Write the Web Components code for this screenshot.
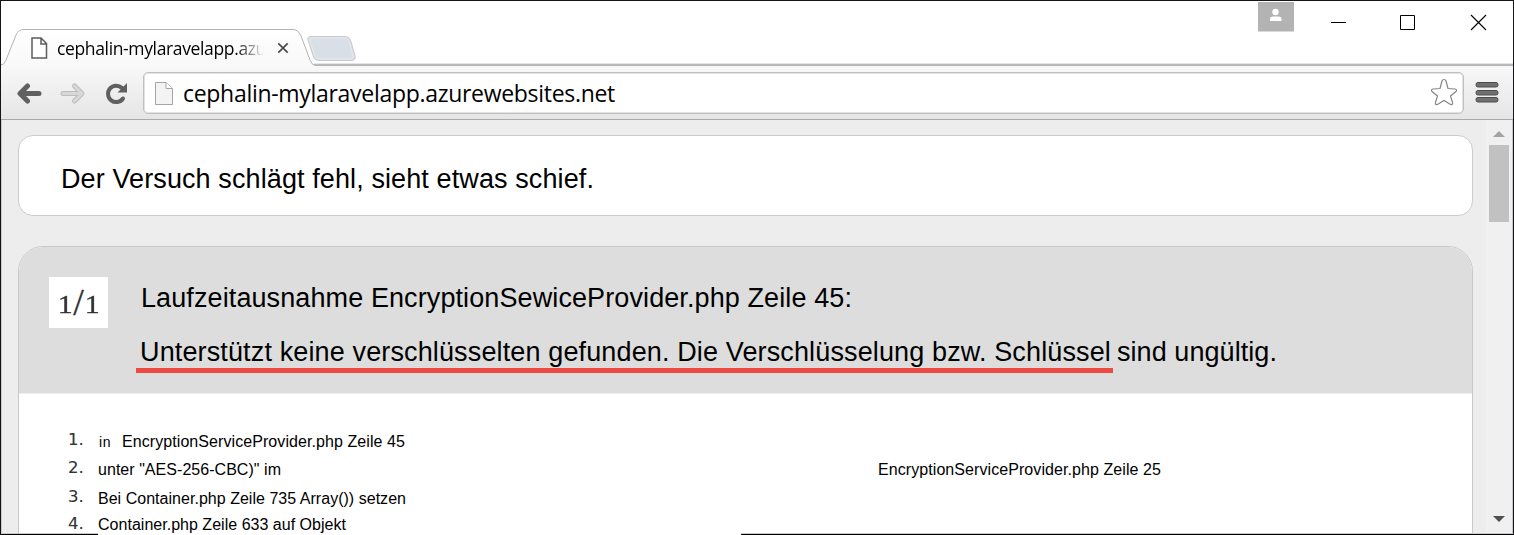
<!DOCTYPE html>
<html lang="de">
<head>
<meta charset="utf-8">
<title>cephalin-mylaravelapp.azurewebsites.net</title>
<style>
html,body{margin:0;width:1514px;height:535px;overflow:hidden;background:#fff}
body{font-family:"Liberation Sans",Arial,sans-serif;color:#000}
.digit{display:inline-block;transform:scaleX(1.2);margin:2px 1.500px 0}
.slash{font-size:38px;margin:-4px .5px 0}
</style>
</head>
<body>
<browser-window>
  <tab-strip slot="tabs"><fit-text w="209">cephalin-mylaravelapp.azu</fit-text></tab-strip>
  <nav-bar slot="nav"><fit-text w="432">cephalin-mylaravelapp.azurewebsites.net</fit-text></nav-bar>
  <error-banner><fit-text w="533">Der Versuch schlägt fehl, sieht etwas schief.</fit-text></error-banner>
  <exception-panel>
    <span slot="count"><span class="digit">1</span><span class="slash">/</span><span class="digit">1</span></span>
    <fit-text slot="title" w="711">Laufzeitausnahme EncryptionSewiceProvider.php Zeile 45:</fit-text>
    <fit-text slot="marked" w="971">Unterstützt keine verschlüsselten gefunden. Die Verschlüsselung bzw. Schlüssel</fit-text>
    <fit-text slot="rest" w="160">sind ungültig.</fit-text>
    <trace-row n="1." style="--h:28px"><fit-text w="12" style="font-size:14px;margin:0 11px 0 1px">in</fit-text><fit-text w="283">EncryptionServiceProvider.php Zeile 45</fit-text></trace-row>
    <trace-row n="2." style="--h:29px"><fit-text w="183" style="margin-right:597px">unter "AES-256-CBC)" im</fit-text><fit-text w="283">EncryptionServiceProvider.php Zeile 25</fit-text></trace-row>
    <trace-row n="3." style="--h:26px"><fit-text w="308">Bei Container.php Zeile 735 Array()) setzen</fit-text></trace-row>
    <trace-row n="4." style="--h:26px;--shift:1px"><fit-text w="248">Container.php Zeile 633 auf Objekt</fit-text></trace-row>
  </exception-panel>
</browser-window>
<script>
const define = (name, html, ready) => customElements.define(name, class extends HTMLElement {
  connectedCallback() {
    if (this.shadowRoot) return;
    this.attachShadow({mode: 'open'}).innerHTML = html;
    if (ready) ready(this);
  }
});

define('browser-window', `
<style>
:host{display:flex;flex-direction:column;position:relative;box-sizing:border-box;width:1514px;height:535px;border:1px solid #16131a;border-bottom-color:#000;background:#fff}
.view{display:flex;flex:1;min-height:0;background:#ededed;border:solid #c9c9c9;border-width:0 1px 1px;box-sizing:border-box}
.page{flex:1;min-width:0;overflow:hidden;padding:15px 13px 0 16px;box-sizing:border-box}
.gap{position:absolute;left:97px;bottom:-1px;width:643px;height:2px;background:#fff}
</style>
<slot name="tabs"></slot><slot name="nav"></slot>
<div class="view"><div class="page"><slot></slot></div><scroll-bar></scroll-bar></div>
<div class="gap"></div>`);

define('fit-text', `<style>:host{display:inline-block;white-space:pre;flex:none}</style><slot></slot>`, el => {
  const target = +el.getAttribute('w');
  requestAnimationFrame(() => {
    const n = el.textContent.length;
    const natural = el.getBoundingClientRect().width;
    el.style.letterSpacing = ((target - natural) / n) + 'px';
    el.style.width = target + 'px';
  });
});

define('tab-strip', `
<style>
:host{display:flex;height:65px;flex:none;position:relative;font:17.500px "Open Sans","Noto Sans",sans-serif}
svg{display:block}
.shape{position:absolute;left:-1px;top:-1px}
.tab{position:relative;display:flex;align-items:center;height:24px;margin:35px 0 0 30px;width:262px}
.label{width:207px;overflow:hidden;line-height:24px;margin-left:9px;-webkit-mask-image:linear-gradient(90deg,#000 178px,transparent 207px)}
.close{margin-left:13px}
.controls{position:absolute;left:1256px;top:0}
</style>
<svg class="shape" width="1514" height="67">
  <defs><linearGradient id="g" x2="0" y2="1"><stop stop-color="#fff"/><stop offset="1" stop-color="#f8f8f8"/></linearGradient></defs>
  <path d="M1 64.500H1513" stroke="#b9b9b9"/><path d="M1 65.500H1513" stroke="#b5b5b5"/><path d="M314 63.500H1513" stroke="#e4e4e4"/>
  <path d="M1 66V65Q4 65 6 60L16 35Q18.500 29.500 24 29.500H293Q298 29.500 301 36L310 60Q312 65.500 316 65.500V67H1Z" fill="url(#g)"/>
  <path d="M1 65Q4 65 6 60L16 35Q18.500 29.500 24 29.500H293Q298 29.500 301 36L310 60Q312 65.500 316 65.500" fill="none" stroke="#b4b4b4"/>
  <path d="M311 36.500H345Q349 36.500 350.500 40L355 56Q356 60.500 351 60.500H319Q315 60.500 313.500 57L308 40Q307 36.500 311 36.500Z" fill="#d9dfe7" stroke="#cacaca"/>
  <path d="M312 38H345Q348 38 349 41L353 56Q354 59 350 59H319Q316 59 315 56L310 41Q309 38 312 38Z" fill="none" stroke="#e6eaef"/>
</svg>
<div class="tab">
  <svg width="17" height="22" viewBox="0 0 17 22"><path d="M1 1H10L15.500 6.500V21H1Z M10 1V7H15.500" fill="#fff" stroke="#5c5c5c" stroke-width="1.500"/></svg>
  <div class="label"><slot></slot></div>
  <svg class="close" width="12" height="12" viewBox="0 0 12 12"><path d="M1.300 1.300L10.700 10.700M10.700 1.300L1.300 10.700" stroke="#4a4a4a" stroke-width="1.700"/></svg>
</div>
<svg class="controls" width="240" height="36">
  <path d="M1 1H37V30.500H1Z" fill="#b3b3b3"/><circle cx="18.500" cy="11" r="3.200" fill="#fff"/><path d="M13 20V18Q13 15.500 16 15.500H21.500Q24.500 15.500 24.500 18V20Z" fill="#fff"/>
  <path d="M74 21.500H89" stroke="#000"/><path d="M143.500 14.500H157.500V28.500H143.500Z" fill="none" stroke="#000"/>
  <path d="M214 14L229 29M229 14L214 29" stroke="#000" stroke-width="1.100"/>
</svg>`);

define('nav-bar', `
<style>
:host{display:flex;position:relative;height:54px;flex:none;box-sizing:border-box;border-bottom:1px solid #a9a9a9;background:linear-gradient(#f8f8f8,#e5e5e5);padding:6px 13px 0 16px;font:23px "Open Sans","Noto Sans",sans-serif}
svg{display:block;flex:none}
.box{display:flex;box-sizing:border-box;width:1321px;height:42px;margin-left:16px;border:1px solid #c0c0c0;border-radius:5px;box-shadow:inset 0 0 0 1px #e2e2e2;background:#fff;padding:0 5px 0 11px}
.url{flex:1;line-height:40px;margin-left:9px}
.menu{margin-left:11px}
</style>
<svg width="110" height="42" viewBox="17 72 110 42">
  <g fill="none" stroke-width="5" stroke-linecap="round" stroke-linejoin="round"><path d="M39 93.500H21M27.500 86L20 93.500L27.500 101" stroke="#606060"/><path d="M63 93.500H81M74.500 86L82 93.500L74.500 101" stroke="#bdbdbd"/><path d="M63 93.500H81M74.500 86L82 93.500L74.500 101" stroke="#d8d8d8" stroke-width="3"/></g>
  <path d="M122 88A8.200 8.200 0 1 0 123 98.500" fill="none" stroke="#606060" stroke-width="4" stroke-linecap="round"/><path d="M127 83V92.500H117.500Z" fill="#606060"/>
</svg>
<div class="box">
<svg width="19" height="42" viewBox="155 72 19 42"><path d="M155.500 81.500H166L172.500 87.500V103.500H155.500Z" fill="#f3f3f3" stroke="#a5a5a5"/><path d="M166 81.500V87.500H172.500" fill="#fff" stroke="#a5a5a5"/></svg>
<div class="url"><slot></slot></div>
<svg width="28" height="40" viewBox="1430 73 28 40"><path d="M1444 79.500Q1445.500 79.500 1446 81L1448 88.500L1455 89Q1457.500 89.500 1456 91.500L1450.500 96L1452.500 102.500Q1453 105 1450.500 104.500L1444 100.500L1437.500 104.500Q1435 105 1435.500 102.500L1437.500 96L1432 91.500Q1430.500 89.500 1433 89L1440 88.500L1442 81Q1442.500 79.500 1444 79.500Z" fill="#fff" stroke="#858585" stroke-width="1.200"/></svg>
</div>
<svg class="menu" width="24" height="42" viewBox="1475 72 24 42"><g fill="#707070" stroke="#4c4c4c"><rect x="1476" y="82.500" width="22" height="4.500" rx="2"/><rect x="1476" y="90.500" width="22" height="4.500" rx="2"/><rect x="1476" y="97.500" width="22" height="4.500" rx="2"/></g></svg>`);

define('scroll-bar', `
<style>
:host{display:flex;flex-direction:column;align-items:center;width:26px;background:#f0f0f0;flex:none}
svg{display:block}.up{margin-top:11px}.thumb{width:20px;height:77px;margin-top:8px;background:#c1c1c1}.down{margin:auto 0 11px}
</style>
<svg class="up" width="12" height="6"><path d="M0 6L6 0L12 6Z" fill="#a3a3a3"/></svg>
<div class="thumb"></div>
<svg class="down" width="12" height="6"><path d="M0 0L6 6L12 0Z" fill="#505050"/></svg>`);

define('error-banner', `
<style>:host{display:block;box-sizing:border-box;height:81px;border:1.500px solid #ccc;border-radius:15px;background:#fff;padding:28px 0 0 42px;font-size:27px;line-height:30px}</style><slot></slot>`);

define('exception-panel', `
<style>
:host{display:block;box-sizing:border-box;height:320px;margin-top:30px;border:1px solid #c8c8c8;border-radius:25px 25px 0 0;background:#fff;overflow:hidden}
header{display:flex;height:147px;background:#ddd;box-sizing:border-box;padding:30px 0 0 30px;border-bottom:1px solid #eee}
.count{box-sizing:border-box;width:59px;height:51px;background:#fff;font:25px/54px "Liberation Serif",serif;color:#333;-webkit-text-stroke:.3px #333}
::slotted([slot=count]){display:flex;justify-content:center;align-items:center;height:54px}
.text{margin-left:31px;font-size:27px;line-height:30px}
.title{height:30px;margin:6px 0 24px 2px}
.line{display:flex}
.marked{height:31px;border-bottom:5px solid #ec4b43;width:977px;margin-left:-3px}
.marked ::slotted(*){margin-left:4px}
.rest{margin-left:4px}
.trace{padding:34px 0 0 49px}
</style>
<header><div class="count"><slot name="count"></slot></div>
<div class="text"><div class="title"><slot name="title"></slot></div><div class="line"><div class="marked"><slot name="marked"></slot></div><div class="rest"><slot name="rest"></slot></div></div></div></header>
<div class="trace"><slot></slot></div>`);

define('trace-row', `
<style>
:host{display:flex;height:var(--h);font-size:16px;line-height:28px}
b{width:30px;flex:none;font:16.500px/24px "DejaVu Sans",Verdana,sans-serif;color:#333;-webkit-text-stroke:.12px #333;margin-top:var(--shift,0)}
</style><b></b><slot></slot>`, el => { el.shadowRoot.querySelector('b').textContent = el.getAttribute('n'); });
</script>
</body>
</html>
